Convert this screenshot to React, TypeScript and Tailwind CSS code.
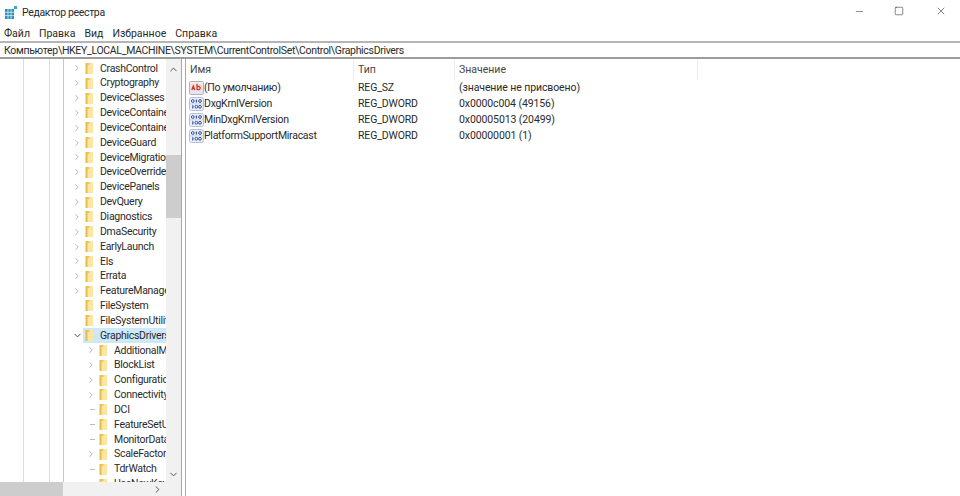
import React from "react";
import { ChevronDown, ChevronRight, ChevronUp, Minus, Square, X } from "lucide-react";

const tree = [
  { name: "CrashControl", level: 0, arrow: "right" },
  { name: "Cryptography", level: 0, arrow: "right" },
  { name: "DeviceClasses", level: 0, arrow: "right" },
  { name: "DeviceContainerPropertyUpdateEvents", level: 0, arrow: "right" },
  { name: "DeviceContainers", level: 0, arrow: "right" },
  { name: "DeviceGuard", level: 0, arrow: "right" },
  { name: "DeviceMigration", level: 0, arrow: "right" },
  { name: "DeviceOverrides", level: 0, arrow: "right" },
  { name: "DevicePanels", level: 0, arrow: "right" },
  { name: "DevQuery", level: 0, arrow: "right" },
  { name: "Diagnostics", level: 0, arrow: "right" },
  { name: "DmaSecurity", level: 0, arrow: "right" },
  { name: "EarlyLaunch", level: 0, arrow: "right" },
  { name: "Els", level: 0, arrow: "right" },
  { name: "Errata", level: 0, arrow: "right" },
  { name: "FeatureManagement", level: 0, arrow: "right" },
  { name: "FileSystem", level: 0, arrow: "none" },
  { name: "FileSystemUtilities", level: 0, arrow: "none" },
  { name: "GraphicsDrivers", level: 0, arrow: "down", selected: true },
  { name: "AdditionalModeLists", level: 1, arrow: "right" },
  { name: "BlockList", level: 1, arrow: "right" },
  { name: "Configuration", level: 1, arrow: "right" },
  { name: "Connectivity", level: 1, arrow: "right" },
  { name: "DCI", level: 1, arrow: "dash" },
  { name: "FeatureSetUsage", level: 1, arrow: "dash" },
  { name: "MonitorDataStore", level: 1, arrow: "dash" },
  { name: "ScaleFactors", level: 1, arrow: "right" },
  { name: "TdrWatch", level: 1, arrow: "dash" },
  { name: "UseNewKey", level: 1, arrow: "dash" },
];

const values = [
  { name: "(По умолчанию)", type: "REG_SZ", value: "(значение не присвоено)", str: true },
  { name: "DxgKrnlVersion", type: "REG_DWORD", value: "0x0000c004 (49156)" },
  { name: "MinDxgKrnlVersion", type: "REG_DWORD", value: "0x00005013 (20499)" },
  { name: "PlatformSupportMiracast", type: "REG_DWORD", value: "0x00000001 (1)" },
];

const FolderIcon = () => (
  <svg width="9" height="13" viewBox="0 0 9 13" className="shrink-0">
    <path d="M2 1h6v11H2z" fill="#fbe6a2" />
    <path d="M2 1h2.5v2H2z" fill="#f0c85c" />
    <path d="M1.5 1v11" stroke="#e8bc4a" strokeWidth="2" />
  </svg>
);

const RegIcon = ({ str }: { str?: boolean }) =>
  str ? (
    <svg width="15" height="14" viewBox="0 0 15 14" className="shrink-0">
      <rect x="0.5" y="0.5" width="14" height="13" rx="1" fill="#f3eeee" stroke="#b3afc0" />
      <path d="M1 9h13v4H1z" fill="#e4e4ee" />
      <path d="M1.5 3h12v6h-12z" fill="#f7dcd6" />
      <path d="M2.8 9l1.5-4 1.5 4M3.4 7.6h1.8M8 2.8V9M8 6c2.4-1.4 3.6.3 3 1.8-.5 1.2-2.2 1.2-3 .3" fill="none" stroke="#c8342a" strokeWidth="1.2" />
    </svg>
  ) : (
    <svg width="15" height="14" viewBox="0 0 15 14" className="shrink-0">
      <rect x="0.5" y="0.5" width="14" height="13" rx="2" fill="#eef0f7" stroke="#b4bcd6" />
      <circle cx="3.8" cy="4" r="1.4" fill="none" stroke="#2b50a8" strokeWidth="1" />
      <path d="M7.4 2.4v3.2" stroke="#2b50a8" strokeWidth="1.2" />
      <circle cx="11" cy="4" r="1.4" fill="none" stroke="#2b50a8" strokeWidth="1" />
      <path d="M3.8 8.2v3.2" stroke="#2b50a8" strokeWidth="1.2" />
      <circle cx="7.4" cy="9.8" r="1.4" fill="none" stroke="#2b50a8" strokeWidth="1" />
      <circle cx="11" cy="9.8" r="1.4" fill="none" stroke="#2b50a8" strokeWidth="1" />
      <path d="M1 6.9h13" stroke="#c3cae0" strokeWidth="0.8" />
    </svg>
  );

export default function App() {
  return (
    <div className="w-[960px] h-[496px] bg-white overflow-hidden flex flex-col text-[#2a2a2a] font-['Roboto',sans-serif]">
      {/* title bar */}
      <div className="h-[24px] flex items-center pl-[5px] shrink-0">
        <svg width="12" height="13" viewBox="0 0 12 13">
          <path d="M0 3h9v10H0z" fill="#2f8fb8" />
          <path d="M3 3v10M6 3v10M0 6.3h9M0 9.6h9" stroke="#d7eef7" strokeWidth="0.8" />
          <path d="M9 0h3v3H9z" fill="#3aa9d6" />
        </svg>
        <span className="ml-[5px] mt-[1px] text-[10.5px] tracking-[-0.35px]">Редактор реестра</span>
        <div className="ml-auto flex items-center text-[#333] -mt-[2px]">
          <Minus size={11} strokeWidth={1.2} className="mr-[29px]" />
          <Square size={10} strokeWidth={1.4} className="mr-[31px]" />
          <X size={12} strokeWidth={1.2} className="mr-[13px]" />
        </div>
      </div>

      {/* menu */}
      <div className="h-[17px] flex items-center gap-[9px] pl-[4px] pt-[3px] text-[10.5px] shrink-0">
        <span>Файл</span>
        <span>Правка</span>
        <span>Вид</span>
        <span>Избранное</span>
        <span>Справка</span>
      </div>

      {/* address bar */}
      <div className="h-[18px] border-y-2 border-y-[#b5b5b5] border-b-[#9c9c9c] flex items-center pl-[4px] pt-[1px] text-[10.5px] tracking-[-0.32px] shrink-0">
        Компьютер\HKEY_LOCAL_MACHINE\SYSTEM\CurrentControlSet\Control\GraphicsDrivers
      </div>

      <div className="flex-1 flex min-h-0">
        {/* tree pane */}
        <div className="w-[181px] shrink-0 flex flex-col">
          <div className="flex-1 flex min-h-0">
            <div className="relative w-[166px] overflow-hidden pt-[2px]">
              {/* guide lines */}
              <div className="absolute top-0 bottom-0 left-[23px] w-px bg-[#dcdcdc]" />
              <div className="absolute top-0 bottom-0 left-[49px] w-px bg-[#dcdcdc]" />
              <div className="absolute top-0 bottom-0 left-[63px] w-px bg-[#c8c8c8]" />
              {tree.map((row) => (
                <div key={row.name} className={`h-[14.85px] flex items-center whitespace-nowrap ${row.level ? "pl-[85px]" : "pl-[71px]"}`}>
                  <span className="w-[12px] h-full shrink-0 flex items-center justify-center text-[#8a8a8a]">
                    {row.arrow === "right" && <ChevronRight size={10} strokeWidth={1.5} />}
                    {row.arrow === "down" && <ChevronDown size={11} strokeWidth={2} className="text-[#444]" />}
                    {row.arrow === "dash" && <span className="w-[5px] h-px bg-[#bdbdbd] ml-[3px]" />}
                  </span>
                  <div className={`flex items-center h-full pl-[2px] ${row.selected ? "bg-[#cde8f7] w-full" : ""}`}>
                    <FolderIcon />
                    <span className="ml-[6px] text-[10.5px] tracking-[-0.28px]">{row.name}</span>
                  </div>
                </div>
              ))}
            </div>
            {/* vertical scrollbar */}
            <div className="w-[15px] shrink-0 bg-[#f1f1f1] flex flex-col items-center">
              <ChevronUp size={11} strokeWidth={2} className="mt-[5px] text-[#444]" />
              <div className="w-full h-[63px] bg-[#cdcdcd] mt-[80px]" />
              <ChevronDown size={11} strokeWidth={2} className="mt-auto mb-[2px] text-[#444]" />
            </div>
          </div>
          {/* horizontal scrollbar */}
          <div className="h-[14px] shrink-0 bg-[#f1f1f1] flex items-center">
            <div className="w-[63px] h-full bg-[#cdcdcd]" />
            <ChevronRight size={11} strokeWidth={2} className="ml-[89px] text-[#444]" />
          </div>
        </div>

        {/* splitter */}
        <div className="w-[5px] shrink-0 border-x border-x-[#a8a8a8] bg-white" />

        {/* value list */}
        <div className="flex-1 min-w-0 text-[10.5px]">
          <div className="h-[21px] flex items-center">
            <div className="w-[168px] pl-[4px] pt-[1px] h-full flex items-center border-r border-r-[#ececec] text-[#444]">Имя</div>
            <div className="w-[101px] pl-[4px] pt-[1px] h-full flex items-center border-r border-r-[#ececec] text-[#444]">Тип</div>
            <div className="w-[243px] pl-[4px] pt-[1px] h-full flex items-center border-r border-r-[#ececec] text-[#444]">Значение</div>
          </div>
          {values.map((v) => (
            <div key={v.name} className="h-[16px] flex items-center">
              <div className="w-[168px] pl-[3px] flex items-center">
                <RegIcon str={v.str} />
                <span className="tracking-[-0.26px]">{v.name}</span>
              </div>
              <div className="w-[101px] pl-[4px] tracking-[-0.15px]">{v.type}</div>
              <div className="pl-[4px] tracking-[-0.1px]">{v.value}</div>
            </div>
          ))}
        </div>
      </div>
    </div>
  );
}
